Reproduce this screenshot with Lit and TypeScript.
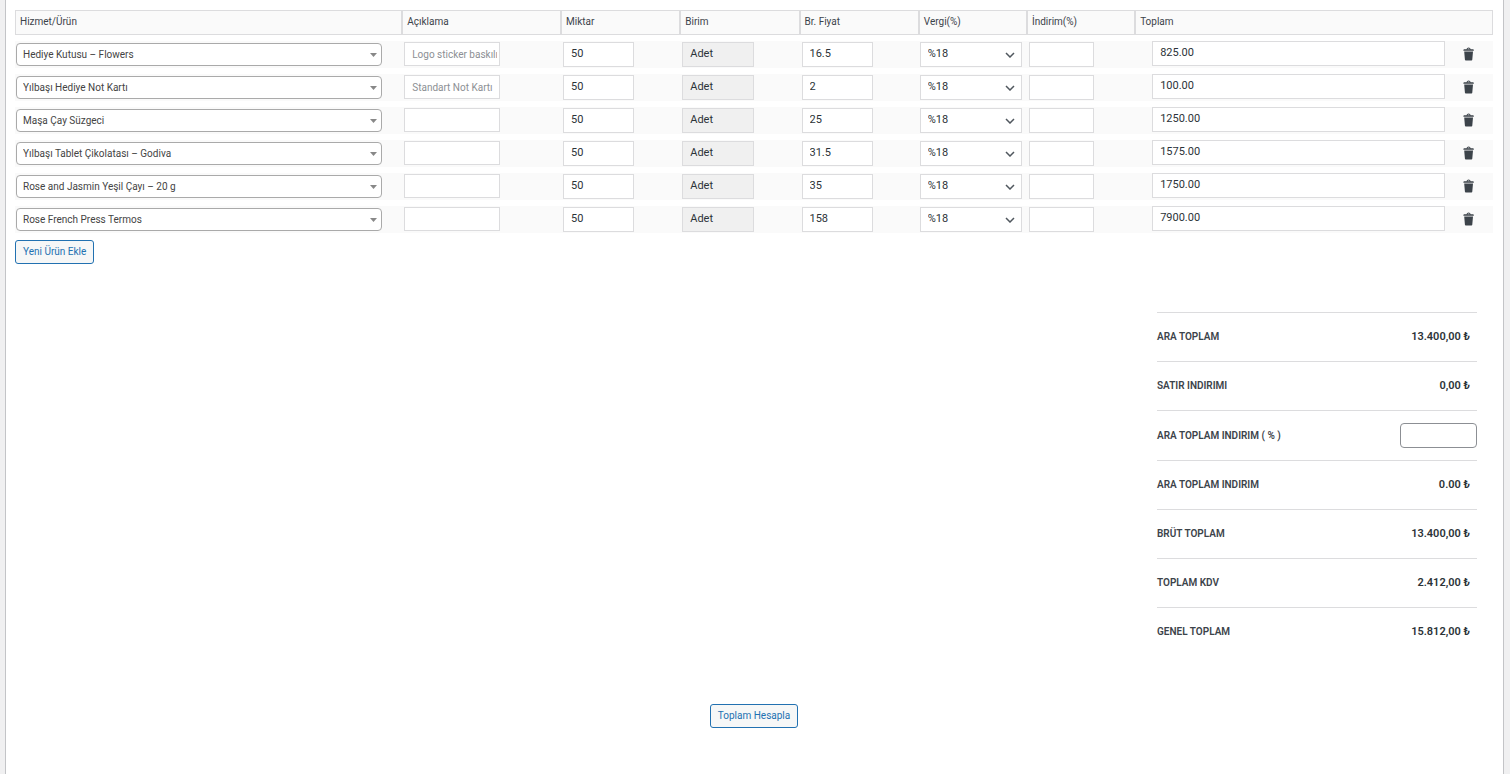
import { LitElement, html, css } from "lit";
import { customElement, state } from "lit/decorators.js";

interface Line {
  product: string;
  note: string;
  quantity: string;
  unit: string;
  price: string;
  tax: string;
  discount: string;
  total: string;
}

interface Total {
  label: string;
  value?: string;
}

const line = (product: string, price: string, total: string, note = ""): Line => ({
  product,
  note,
  quantity: "50",
  unit: "Adet",
  price,
  tax: "%18",
  discount: "",
  total,
});

const COLUMNS = [
  { name: "product", title: "Hizmet/Ürün" },
  { name: "note", title: "Açıklama" },
  { name: "quantity", title: "Miktar" },
  { name: "unit", title: "Birim" },
  { name: "price", title: "Br. Fiyat" },
  { name: "tax", title: "Vergi(%)" },
  { name: "discount", title: "İndirim(%)" },
  { name: "total", title: "Toplam" },
];

const TOTALS: Total[] = [
  { label: "ARA TOPLAM", value: "13.400,00 ₺" },
  { label: "SATIR INDIRIMI", value: "0,00 ₺" },
  { label: "ARA TOPLAM INDIRIM ( % )" },
  { label: "ARA TOPLAM INDIRIM", value: "0.00 ₺" },
  { label: "BRÜT TOPLAM", value: "13.400,00 ₺" },
  { label: "TOPLAM KDV", value: "2.412,00 ₺" },
  { label: "GENEL TOPLAM", value: "15.812,00 ₺" },
];

@customElement("app-root")
export class AppRoot extends LitElement {
  static styles = css`
    :host {
      display: block;
      min-height: 100vh;
      box-sizing: border-box;
      padding: 0 6px 0 5px;
      background: #f0f0f1;
      color: #3c434a;
      font-family: Roboto, "Liberation Sans", sans-serif;
      font-size: 10px;
      line-height: 14px;
    }
    * {
      box-sizing: border-box;
    }
    .panel {
      min-height: 100vh;
      padding: 4px 10px 45px 9px;
      border: solid #c3c4c7;
      border-width: 0 1px;
      background: #fff;
    }
    .lines {
      width: 100%;
      margin-bottom: 1px;
      table-layout: fixed;
      border-collapse: separate;
      border-spacing: 0 6px;
    }
    .head {
      height: 25px;
      padding: 0 4px 2px;
      border: 1px solid #dcdcde;
      background: #fafafa;
      font-weight: 400;
      text-align: left;
    }
    .head.product { width: 26.2%; }
    .head.note { width: 10.74%; }
    .head.quantity,
    .head.unit,
    .head.price { width: 8.07%; }
    .head.tax,
    .head.discount { width: 7.32%; }
    .cell {
      height: 27px;
      padding: 1px 2px;
      background: #fafafa;
      vertical-align: top;
    }
    .cell.product,
    .cell.tax {
      padding-left: 1px;
      padding-right: 1px;
    }
    .cell.total {
      padding: 0 0 0 17px;
    }
    .field {
      display: block;
      width: 62%;
      height: 25px;
      margin: 0;
      padding: 0 7px 2px;
      border: 1px solid #dcdcde;
      border-radius: 0;
      background: #fff;
      color: #2c3338;
      font: inherit;
      font-size: 11px;
      outline-color: #2271b1;
    }
    .field.small {
      height: 24px;
      padding: 0 2px 0 7px;
      font-size: 10px;
    }
    .field.small::placeholder {
      color: #8c8f94;
      opacity: 1;
    }
    .field.locked {
      background: #f0f0f0;
    }
    .picker {
      display: grid;
      align-items: center;
    }
    .picker > * {
      grid-area: 1 / 1;
    }
    .picker.wide {
      width: 95%;
      padding-top: 1px;
    }
    .picker.narrow {
      width: 96%;
    }
    .select {
      appearance: none;
      width: 100%;
    }
    .picker.wide .select {
      height: 23px;
      padding: 0 20px 0 6px;
      border-color: #aaa;
      border-radius: 4px;
      color: #444;
      font-size: 10px;
    }
    .arrow {
      justify-self: end;
      margin-right: 5px;
      pointer-events: none;
    }
    .picker.narrow .arrow {
      margin: 1px 7px 0 0;
    }
    .sum {
      display: flex;
    }
    .sum .field {
      flex: 1;
      min-width: 0;
    }
    .remove {
      display: flex;
      align-items: center;
      justify-content: center;
      width: 48px;
      height: 25px;
      padding: 0;
      border: 0;
      background: none;
      color: #3c434a;
      cursor: pointer;
    }
    .action {
      display: block;
      height: 24px;
      padding: 0 7px;
      border: 1px solid #2271b1;
      border-radius: 3px;
      background: #f6f7f7;
      color: #2271b1;
      font: inherit;
      cursor: pointer;
    }
    .totals {
      width: 320px;
      margin: 48px 16px 48px auto;
      border-collapse: separate;
      border-spacing: 0;
    }
    .label,
    .amount {
      height: 49px;
      padding: 0;
      border-top: 1px solid #dcdcde;
      font-weight: 600;
    }
    .label {
      text-align: left;
    }
    .amount {
      padding: 0 7px 0 0;
      color: #2c3338;
      font-size: 11px;
      text-align: right;
    }
    .amount.entry {
      height: 50px;
      padding: 0;
    }
    .rate {
      display: block;
      width: 77px;
      height: 25px;
      margin-left: auto;
      padding: 0 8px;
      border: 1px solid #8c8f94;
      border-radius: 4px;
      background: #fff;
      color: #2c3338;
      font: inherit;
      font-size: 11px;
    }
    .calculate {
      margin: 0 auto;
    }
  `;

  @state() private lines: Line[] = [
    line("Hediye Kutusu – Flowers", "16.5", "825.00", "Logo sticker baskılı"),
    line("Yılbaşı Hediye Not Kartı", "2", "100.00", "Standart Not Kartı"),
    line("Maşa Çay Süzgeci", "25", "1250.00"),
    line("Yılbaşı Tablet Çikolatası – Godiva", "31.5", "1575.00"),
    line("Rose and Jasmin Yeşil Çayı – 20 g", "35", "1750.00"),
    line("Rose French Press Termos", "158", "7900.00"),
  ];

  private addLine() {
    this.lines = [...this.lines, line("", "", "")];
  }

  private removeLine(index: number) {
    this.lines = this.lines.filter((_, i) => i !== index);
  }

  private renderLine(item: Line, index: number) {
    return html`
      <tr>
        <td class="cell product">
          <div class="picker wide">
            <select class="field select" aria-label="Hizmet/Ürün">
              <option>${item.product}</option>
            </select>
            <svg class="arrow" width="7" height="4" viewBox="0 0 7 4" aria-hidden="true">
              <path d="M0 0h7L3.5 4z" fill="#888" />
            </svg>
          </div>
        </td>
        <td class="cell">
          <input class="field small" aria-label="Açıklama" placeholder=${item.note} />
        </td>
        <td class="cell">
          <input class="field" aria-label="Miktar" .value=${item.quantity} />
        </td>
        <td class="cell">
          <input class="field locked" aria-label="Birim" readonly .value=${item.unit} />
        </td>
        <td class="cell">
          <input class="field" aria-label="Br. Fiyat" .value=${item.price} />
        </td>
        <td class="cell tax">
          <div class="picker narrow">
            <select class="field select" aria-label="Vergi(%)">
              <option>${item.tax}</option>
            </select>
            <svg class="arrow" width="10" height="6" viewBox="0 0 10 6" aria-hidden="true">
              <path d="M1 1l4 4 4-4" fill="none" stroke="#50575e" stroke-width="1.5" />
            </svg>
          </div>
        </td>
        <td class="cell">
          <input class="field" aria-label="İndirim(%)" .value=${item.discount} />
        </td>
        <td class="cell total">
          <div class="sum">
            <input class="field" aria-label="Toplam" .value=${item.total} />
            <button
              class="remove"
              type="button"
              aria-label="Sil"
              @click=${() => this.removeLine(index)}
            >
              <svg width="16" height="16" viewBox="0 0 20 20" fill="currentColor" aria-hidden="true">
                <path
                  d="M12 4h3c.6 0 1 .4 1 1v1H3V5c0-.6.5-1 1-1h3c.2-1.1 1.3-2 2.5-2s2.3.9 2.5 2zM8 4h3c-.2-.6-.9-1-1.5-1S8.2 3.4 8 4zM4 7h11l-.9 10.1c0 .5-.5.9-1 .9H5.9c-.5 0-.9-.4-1-.9L4 7z"
                />
              </svg>
            </button>
          </div>
        </td>
      </tr>
    `;
  }

  render() {
    return html`
      <main class="panel">
        <table class="lines">
          <thead>
            <tr>
              ${COLUMNS.map((c) => html`<th class="head ${c.name}" scope="col">${c.title}</th>`)}
            </tr>
          </thead>
          <tbody>
            ${this.lines.map((item, index) => this.renderLine(item, index))}
          </tbody>
        </table>
        <button class="action" type="button" @click=${this.addLine}>Yeni Ürün Ekle</button>
        <table class="totals">
          <tbody>
            ${TOTALS.map(
              (t) => html`
                <tr>
                  <th class="label" scope="row">
                    ${t.value ? t.label : html`<label for="rate">${t.label}</label>`}
                  </th>
                  ${t.value
                    ? html`<td class="amount">${t.value}</td>`
                    : html`<td class="amount entry"><input class="rate" id="rate" /></td>`}
                </tr>
              `
            )}
          </tbody>
        </table>
        <button class="action calculate" type="button">Toplam Hesapla</button>
      </main>
    `;
  }
}
